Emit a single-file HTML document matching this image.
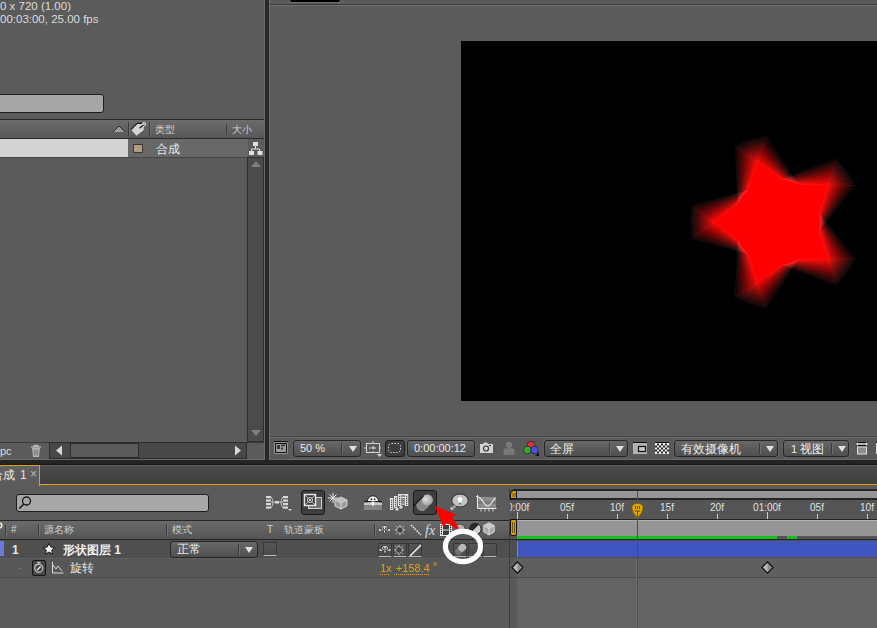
<!DOCTYPE html>
<html><head><meta charset="utf-8">
<style>
*{margin:0;padding:0;box-sizing:border-box}
html,body{width:877px;height:628px;overflow:hidden;background:#5b5b5b;font-family:"Liberation Sans",sans-serif;font-size:11px;color:#dcdcdc}
.a{position:absolute}
.t{position:absolute;white-space:nowrap;line-height:12px}
.dd{border:1px solid #262626;border-radius:3px;background:linear-gradient(#676767,#4f4f4f);box-shadow:0 0 0 1px rgba(110,110,110,.35)}
.dv{width:2px;border-left:1px solid #3a3a3a;border-right:1px solid #6e6e6e}
.tri{width:0;height:0;margin-left:1px;margin-top:0px;border-left:4px solid transparent;border-right:4px solid transparent;border-top:6px solid #e0e0e0}
.pb{background:#3e3e3e;border:1px solid #1b1b1b;border-radius:3px}
.hs{width:1px;height:12px;background:#3c3c3c;box-shadow:1px 0 0 #727272}
.sw{width:14px;height:14px;background:linear-gradient(#555,#4c4c4c);border:1px solid #383838;border-bottom:1px solid #b8b8b8}
.rl{font-size:10px;color:#e0e0e0;line-height:11px}
</style></head><body>
<!-- PROJECT PANEL -->
<div class="a" style="left:0;top:0;width:265px;height:460px;background:#5b5b5b"></div>
<div class="t" style="left:0;top:0px;font-size:11.5px;line-height:13px">0 x 720 (1.00)</div>
<div class="t" style="left:0;top:13px;font-size:11.5px;line-height:13px">00:03:00, 25.00 fps</div>
<div class="a" style="left:-4px;top:94px;width:108px;height:19px;background:#a6a6a6;border:1px solid #1f1f1f;border-radius:3px"></div>
<div class="a" style="left:0;top:119px;width:265px;height:1px;background:#2a2a2a"></div>
<div class="a" style="left:0;top:120px;width:264px;height:18px;background:linear-gradient(#6c6c6c,#575757)"></div>
<div class="a" style="left:0;top:138px;width:264px;height:1px;background:#2a2a2a"></div>
<div class="a" style="left:0;top:139px;width:128px;height:18px;background:#d3d3d3"></div>
<div class="a" style="left:128px;top:139px;width:120px;height:18px;background:#686868"></div>
<div class="a" style="left:0;top:157px;width:248px;height:1px;background:#474747"></div>
<div class="a" style="left:133px;top:144px;width:10px;height:9px;background:#b09e7c;border:1px solid #3a3a3a"></div>
<div class="t" style="left:156px;top:143px;font-size:12px;color:#e8e8e8">合成</div>
<div class="t" style="left:155px;top:124px;font-size:10px;color:#cfcfcf">类型</div>
<div class="t" style="left:232px;top:124px;font-size:10px;color:#cfcfcf">大小</div>
<div class="a" style="left:226px;top:124px;width:1px;height:11px;background:#3f3f3f"></div>
<!-- scrollbar v -->
<div class="a" style="left:248px;top:139px;width:16px;height:18px;background:#5b5b5b"></div>
<div class="a" style="left:247px;top:157px;width:17px;height:285px;background:#4b4b4b;border:1px solid #2f2f2f"></div>
<!-- bottom bar -->
<div class="a" style="left:0;top:442px;width:265px;height:17px;background:#5b5b5b;border-top:1px solid #3a3a3a"></div>
<div class="a" style="left:0;top:459px;width:264px;height:1px;background:#6a6a6a"></div>
<div class="a" style="left:49px;top:442px;width:198px;height:17px;background:#484848;border:1px solid #2d2d2d"></div>
<div class="a" style="left:70px;top:443px;width:69px;height:15px;background:#5b5b5b;border:1px solid #2d2d2d"></div>
<div class="t" style="left:0;top:445px;font-size:11px">pc</div>

<!-- SEPARATOR -->
<div class="a" style="left:264px;top:0;width:1px;height:460px;background:#6c6c6c"></div>
<div class="a" style="left:265px;top:0;width:4px;height:465px;background:#292929"></div>
<div class="a" style="left:269px;top:0;width:1px;height:460px;background:#6c6c6c"></div>

<!-- VIEWER -->
<div class="a" style="left:290px;top:-2px;width:50px;height:4px;background:#000;border-radius:2px;box-shadow:0 0 0 1px #6a6a6a"></div>
<div class="a" style="left:270px;top:4px;width:607px;height:1px;background:#3d3d3d"></div>
<div class="a" style="left:270px;top:5px;width:607px;height:1px;background:#6e6e6e"></div>
<div class="a" style="left:461px;top:41px;width:416px;height:360px;background:#000;overflow:hidden">
<svg id="star" width="416" height="360" viewBox="461 41 416 360" style="position:absolute;left:0;top:0;isolation:isolate"><polygon points="692.1,238.5 738.0,203.8 735.1,146.3 782.2,179.3 836.0,158.7 819.2,213.8 855.4,258.6 797.8,259.6 766.5,307.9 747.7,253.4" fill="rgb(255,0,0)" fill-opacity="0.0592" stroke="rgb(255,235,235)" stroke-opacity="0.07" stroke-width="0.7" style="mix-blend-mode:plus-lighter"/>
<polygon points="691.7,236.5 738.5,202.9 736.9,145.4 783.3,179.5 837.5,160.2 819.4,214.8 854.5,260.4 796.9,260.1 764.4,307.6 746.9,252.7" fill="rgb(255,0,0)" fill-opacity="0.0592" stroke="rgb(255,235,235)" stroke-opacity="0.07" stroke-width="0.7" style="mix-blend-mode:plus-lighter"/>
<polygon points="691.4,234.4 738.9,202.0 738.7,144.4 784.3,179.6 839.0,161.6 819.6,215.8 853.6,262.3 796.0,260.6 762.4,307.3 746.2,252.0" fill="rgb(255,0,0)" fill-opacity="0.0592" stroke="rgb(255,235,235)" stroke-opacity="0.07" stroke-width="0.7" style="mix-blend-mode:plus-lighter"/>
<polygon points="691.1,232.4 739.4,201.1 740.6,143.5 785.3,179.8 840.4,163.1 819.7,216.9 852.6,264.1 795.1,261.0 760.3,306.9 745.5,251.3" fill="rgb(255,0,0)" fill-opacity="0.0592" stroke="rgb(255,235,235)" stroke-opacity="0.07" stroke-width="0.7" style="mix-blend-mode:plus-lighter"/>
<polygon points="690.9,230.3 739.9,200.2 742.5,142.7 786.3,180.0 841.8,164.7 819.8,217.9 851.5,265.9 794.1,261.4 758.3,306.4 744.8,250.5" fill="rgb(255,0,0)" fill-opacity="0.0592" stroke="rgb(255,235,235)" stroke-opacity="0.07" stroke-width="0.7" style="mix-blend-mode:plus-lighter"/>
<polygon points="690.7,228.2 740.5,199.3 744.4,141.9 787.3,180.3 843.1,166.3 819.9,218.9 850.5,267.7 793.2,261.8 756.3,306.0 744.1,249.7" fill="rgb(255,0,0)" fill-opacity="0.0592" stroke="rgb(255,235,235)" stroke-opacity="0.07" stroke-width="0.7" style="mix-blend-mode:plus-lighter"/>
<polygon points="690.6,226.2 741.0,198.4 746.4,141.1 788.3,180.5 844.5,167.9 820.0,219.9 849.3,269.4 792.2,262.2 754.2,305.5 743.5,248.9" fill="rgb(255,0,0)" fill-opacity="0.0592" stroke="rgb(255,235,235)" stroke-opacity="0.07" stroke-width="0.7" style="mix-blend-mode:plus-lighter"/>
<polygon points="690.5,224.1 741.6,197.6 748.3,140.4 789.3,180.8 845.7,169.5 820.0,221.0 848.2,271.1 791.3,262.6 752.3,304.9 742.8,248.1" fill="rgb(255,0,0)" fill-opacity="0.0592" stroke="rgb(255,235,235)" stroke-opacity="0.07" stroke-width="0.7" style="mix-blend-mode:plus-lighter"/>
<polygon points="690.5,222.0 742.2,196.7 750.3,139.7 790.3,181.1 847.0,171.2 820.0,222.0 847.0,272.8 790.3,262.9 750.3,304.3 742.2,247.3" fill="rgb(255,0,0)" fill-opacity="0.0592" stroke="rgb(255,235,235)" stroke-opacity="0.07" stroke-width="0.7" style="mix-blend-mode:plus-lighter"/>
<polygon points="690.5,219.9 742.8,195.9 752.3,139.1 791.3,181.4 848.2,172.9 820.0,223.0 845.7,274.5 789.3,263.2 748.3,303.6 741.6,246.4" fill="rgb(255,0,0)" fill-opacity="0.0592" stroke="rgb(255,235,235)" stroke-opacity="0.07" stroke-width="0.7" style="mix-blend-mode:plus-lighter"/>
<polygon points="690.6,217.8 743.5,195.1 754.2,138.5 792.2,181.8 849.3,174.6 820.0,224.1 844.5,276.1 788.3,263.5 746.4,302.9 741.0,245.6" fill="rgb(255,0,0)" fill-opacity="0.0592" stroke="rgb(255,235,235)" stroke-opacity="0.07" stroke-width="0.7" style="mix-blend-mode:plus-lighter"/>
<polygon points="690.7,215.8 744.1,194.3 756.3,138.0 793.2,182.2 850.5,176.3 819.9,225.1 843.1,277.7 787.3,263.7 744.4,302.1 740.5,244.7" fill="rgb(255,0,0)" fill-opacity="0.0592" stroke="rgb(255,235,235)" stroke-opacity="0.07" stroke-width="0.7" style="mix-blend-mode:plus-lighter"/>
<polygon points="690.9,213.7 744.8,193.5 758.3,137.6 794.1,182.6 851.5,178.1 819.8,226.1 841.8,279.3 786.3,264.0 742.5,301.3 739.9,243.8" fill="rgb(255,0,0)" fill-opacity="0.0592" stroke="rgb(255,235,235)" stroke-opacity="0.07" stroke-width="0.7" style="mix-blend-mode:plus-lighter"/>
<polygon points="691.1,211.6 745.5,192.7 760.3,137.1 795.1,183.0 852.6,179.9 819.7,227.1 840.4,280.9 785.3,264.2 740.6,300.5 739.4,242.9" fill="rgb(255,0,0)" fill-opacity="0.0592" stroke="rgb(255,235,235)" stroke-opacity="0.07" stroke-width="0.7" style="mix-blend-mode:plus-lighter"/>
<polygon points="691.4,209.6 746.2,192.0 762.4,136.7 796.0,183.4 853.6,181.7 819.6,228.2 839.0,282.4 784.3,264.4 738.7,299.6 738.9,242.0" fill="rgb(255,0,0)" fill-opacity="0.0592" stroke="rgb(255,235,235)" stroke-opacity="0.07" stroke-width="0.7" style="mix-blend-mode:plus-lighter"/>
<polygon points="691.7,207.5 746.9,191.3 764.4,136.4 796.9,183.9 854.5,183.6 819.4,229.2 837.5,283.8 783.3,264.5 736.9,298.6 738.5,241.1" fill="rgb(255,0,0)" fill-opacity="0.0592" stroke="rgb(255,235,235)" stroke-opacity="0.07" stroke-width="0.7" style="mix-blend-mode:plus-lighter"/>
<polygon points="692.1,205.5 747.7,190.6 766.5,136.1 797.8,184.4 855.4,185.4 819.2,230.2 836.0,285.3 782.2,264.7 735.1,297.7 738.0,240.2" fill="rgb(255,0,0)" fill-opacity="0.0592" stroke="rgb(255,235,235)" stroke-opacity="0.07" stroke-width="0.7" style="mix-blend-mode:plus-lighter"/></svg>
</div>

<!-- viewer toolbar items -->
<div class="a" style="left:270px;top:436px;width:607px;height:1px;background:#464646"></div>
<div class="a" style="left:270px;top:437px;width:607px;height:1px;background:#6a6a6a"></div>
<div class="a" style="left:270px;top:438px;width:607px;height:20px;background:#595959"></div>
<div class="a" style="left:270px;top:458px;width:607px;height:1px;background:#595959"></div>
<div class="a" style="left:270px;top:459px;width:607px;height:1px;background:#6c6c6c"></div>
<svg class="a" style="left:273px;top:440px" width="16" height="15"><path d="M1 1.5h14" stroke="#111"/><rect x="1.5" y="2.5" width="13" height="11" fill="#d0d0d0"/><rect x="2.5" y="3.5" width="11" height="9" fill="#9c9c9c" stroke="#151515"/><rect x="4" y="5" width="3" height="4" fill="#3a3a3a"/><rect x="8" y="4.5" width="4" height="1.8" fill="#3a3a3a"/><rect x="8" y="7.5" width="2" height="2" fill="#3a3a3a"/></svg>
<div class="a dd" style="left:293px;top:440px;width:68px;height:17px"></div>
<div class="t" style="left:300px;top:442px;color:#e6e6e6">50 %</div>
<div class="a dv" style="left:341px;top:443px;height:11px"></div>
<div class="a tri" style="left:348px;top:446px"></div>
<svg class="a" style="left:364px;top:440px" width="20" height="18"><rect x="2.5" y="3.5" width="13" height="9" fill="none" stroke="#d4d4d4"/><path d="M9 1v15M0 8h18" stroke="#d4d4d4" stroke-dasharray="2 3" /><circle cx="9" cy="8" r="1.3" fill="#d4d4d4"/><path d="M13 14h5l-2.5 3z" fill="#d4d4d4"/></svg>
<div class="a" style="left:385px;top:440px;width:20px;height:17px;background:#3d3d3d;border:1px solid #1c1c1c;border-radius:3px"></div>
<svg class="a" style="left:387px;top:442px" width="16" height="13"><rect x="1.5" y="1.5" width="12" height="9" rx="3" fill="none" stroke="#dcdcdc" stroke-dasharray="1.5 1.5"/></svg>
<div class="a dd" style="left:407px;top:440px;width:68px;height:17px"></div>
<div class="t" style="left:414px;top:442px;color:#e6e6e6">0:00:00:12</div>
<svg class="a" style="left:479px;top:441px" width="15" height="13"><path d="M1 3h3l1-1.5h3l1 1.5h5v9h-13z" fill="#d2d2d2"/><circle cx="7" cy="7.5" r="2.5" fill="none" stroke="#333" stroke-width="1.2"/><rect x="10" y="4" width="2" height="1" fill="#333"/></svg>
<svg class="a" style="left:503px;top:441px" width="13" height="15"><circle cx="6" cy="4" r="3.2" fill="#787878"/><path d="M0.5 14v-4q0-3 3-3h5q3 0 3 3v4z" fill="#787878"/></svg>
<svg class="a" style="left:522px;top:440px" width="18" height="17"><circle cx="9" cy="5" r="3.8" fill="#e03030" stroke="#222" stroke-width=".7"/><circle cx="5.5" cy="10" r="3.8" fill="#30b030" stroke="#222" stroke-width=".7"/><circle cx="12.5" cy="10" r="3.8" fill="#5050e0" stroke="#222" stroke-width=".7"/><path d="M13 16h4v-4z" fill="#111"/></svg>
<div class="a dd" style="left:544px;top:440px;width:84px;height:17px"></div>
<div class="t" style="left:550px;top:443px;font-size:12px;color:#ececec">全屏</div>
<div class="a dv" style="left:609px;top:443px;height:11px"></div>
<div class="a tri" style="left:615px;top:446px"></div>
<svg class="a" style="left:632px;top:441px" width="16" height="14"><path d="M1 1.5h14" stroke="#111"/><rect x="1" y="2" width="14" height="11" fill="#b2b2b2"/><rect x="6.5" y="5.5" width="7" height="5" fill="#c8c8c8" stroke="#111" stroke-width="1.2"/></svg>
<svg class="a" style="left:654px;top:441px" width="16" height="14"><path d="M1 1.5h14" stroke="#111"/><rect x="1" y="2" width="14" height="11" fill="#f0f0f0"/><rect x="3" y="2.5" width="2" height="2" fill="#2a2a2a"/><rect x="7" y="2.5" width="2" height="2" fill="#2a2a2a"/><rect x="11" y="2.5" width="2" height="2" fill="#2a2a2a"/><rect x="1" y="4.5" width="2" height="2" fill="#2a2a2a"/><rect x="5" y="4.5" width="2" height="2" fill="#2a2a2a"/><rect x="9" y="4.5" width="2" height="2" fill="#2a2a2a"/><rect x="13" y="4.5" width="2" height="2" fill="#2a2a2a"/><rect x="3" y="6.5" width="2" height="2" fill="#2a2a2a"/><rect x="7" y="6.5" width="2" height="2" fill="#2a2a2a"/><rect x="11" y="6.5" width="2" height="2" fill="#2a2a2a"/><rect x="1" y="8.5" width="2" height="2" fill="#2a2a2a"/><rect x="5" y="8.5" width="2" height="2" fill="#2a2a2a"/><rect x="9" y="8.5" width="2" height="2" fill="#2a2a2a"/><rect x="13" y="8.5" width="2" height="2" fill="#2a2a2a"/><rect x="3" y="10.5" width="2" height="2" fill="#2a2a2a"/><rect x="7" y="10.5" width="2" height="2" fill="#2a2a2a"/><rect x="11" y="10.5" width="2" height="2" fill="#2a2a2a"/></svg>
<div class="a dd" style="left:674px;top:440px;width:104px;height:17px"></div>
<div class="t" style="left:681px;top:443px;font-size:12px;color:#ececec">有效摄像机</div>
<div class="a dv" style="left:759px;top:443px;height:11px"></div>
<div class="a tri" style="left:765px;top:446px"></div>
<div class="a dd" style="left:783px;top:440px;width:66px;height:17px"></div>
<div class="t" style="left:791px;top:443px;font-size:12px;color:#ececec"><span style="font-size:11px">1</span> 视图</div>
<div class="a dv" style="left:831px;top:443px;height:11px"></div>
<div class="a tri" style="left:837px;top:446px"></div>
<svg class="a" style="left:855px;top:440px" width="22" height="16"><path d="M1.5 2.5h11M1.5 5.5h11" stroke="#111"/><path d="M2 4h10" stroke="#e0e0e0" stroke-width="1.3"/><path d="M1 4l2-2v4zM13 4l-2-2v4z" fill="#e0e0e0"/><rect x="2.5" y="7" width="9" height="7" fill="#8c8c8c" stroke="#dcdcdc"/><path d="M21 2.5h2" stroke="#111"/><rect x="21" y="3" width="2" height="11" fill="#e0e0e0"/></svg>



<!-- gap -->
<div class="a" style="left:0;top:460px;width:877px;height:5px;background:#242424"></div>
<div class="a" style="left:0;top:464px;width:877px;height:1px;background:#1a1a1a"></div>

<!-- TIMELINE -->
<div class="a" style="left:0;top:465px;width:877px;height:163px;background:#5b5b5b"></div>
<div class="a" style="left:40px;top:465px;width:837px;height:19px;background:linear-gradient(#5a5a5a 0,#5a5a5a 1px,#4c4c4c 1px,#3f3f3f)"></div>
<div class="a" style="left:-2px;top:465px;width:42px;height:21px;border:1px solid #e5a000;border-bottom:none;background:linear-gradient(#626262,#5b5b5b)"></div>
<div class="a" style="left:40px;top:484px;width:837px;height:1px;background:#e5a000"></div>
<div class="t" style="left:-9px;top:469px;font-size:12px;color:#e8e8e8">合成</div><div class="t" style="left:20px;top:469px;font-size:12px;color:#e0e0e0">1</div><div class="t" style="left:30px;top:468px;font-size:12px;color:#b8b8b8">×</div>

<!-- timeline toolbar -->
<div class="a" style="left:16px;top:494px;width:193px;height:18px;background:#a7a7a7;border:1px solid #1d1d1d;border-radius:3px"></div>
<svg class="a" style="left:17px;top:495px" width="16" height="16"><circle cx="9.5" cy="6" r="4" fill="none" stroke="#1a1a1a" stroke-width="1.4"/><path d="M6.8 9l-4.5 4.5" stroke="#1a1a1a" stroke-width="1.6"/></svg>
<svg class="a" style="left:266px;top:495px" width="26" height="16"><g fill="#d8d8d8"><rect x="0" y="1" width="5" height="2.2"/><rect x="0" y="4.5" width="5" height="2.2"/><rect x="0" y="8" width="5" height="2.2"/><rect x="0" y="11.5" width="5" height="2.2"/><rect x="17" y="1" width="5" height="2.2"/><rect x="17" y="4.5" width="5" height="2.2"/><rect x="17" y="8" width="5" height="2.2"/><rect x="17" y="11.5" width="5" height="2.2"/><rect x="9" y="6" width="4" height="2.5"/></g><path d="M5 2q4 5 0 11M17 2q-4 5 0 11M5 7.2h12" stroke="#d8d8d8" fill="none" stroke-width=".8"/><path d="M22 14h4l-2 2z" fill="#d8d8d8"/></svg>
<div class="a pb" style="left:301px;top:490px;width:24px;height:25px"></div>
<svg class="a" style="left:303px;top:493px" width="20" height="18"><rect x="5.5" y="4.5" width="13" height="11" fill="#6e6e6e" stroke="#cfcfcf"/><rect x="1.5" y="1.5" width="11" height="11" fill="#3a3a3a" stroke="#e0e0e0" stroke-width="1.5"/><path d="M2 2l10 10M12 2l-10 10" stroke="#cfcfcf" stroke-width=".8"/><circle cx="7" cy="7" r="2.5" fill="#3a3a3a" stroke="#e0e0e0"/><circle cx="7" cy="7" r="1" fill="#fff"/></svg>
<svg class="a" style="left:328px;top:492px" width="20" height="19"><path d="M5 1v10M0 6h10M1.5 2.5l7 7M8.5 2.5l-7 7" stroke="#e8e8e8" stroke-width="1"/><path d="M13 5l6 3v6l-6 3-6-3v-6z" fill="#9a9a9a" stroke="#d8d8d8"/><path d="M7 8l6 3 6-3M13 11v6" stroke="#d8d8d8" fill="none"/><path d="M7 8l6-3 6 3-6 3z" fill="#c0c0c0"/></svg>
<svg class="a" style="left:363px;top:494px" width="20" height="17"><rect x="1" y="8.3" width="18" height="3" fill="#cacaca"/><rect x="1" y="11.3" width="18" height="4.7" fill="#858585"/><path d="M4.3 7.5a5.7 5.7 0 0 1 11.4 0z" fill="#f2f2f2" stroke="#1a1a1a" stroke-width="1"/><path d="M1 7.6h3.5M15.5 7.6h3.5" stroke="#1a1a1a" stroke-width="1.2"/><path d="M8.5 7.5h3l-0.8 4.5h-1.4z" fill="#f2f2f2"/><circle cx="8.4" cy="5.2" r=".85" fill="#222"/><circle cx="11.6" cy="5.2" r=".85" fill="#222"/></svg>
<svg class="a" style="left:389px;top:493px" width="21" height="19"><g fill="#e2e2e2"><rect x="1" y="5" width="3.2" height="12"/><rect x="5" y="3" width="3.2" height="12"/><rect x="9" y="1" width="3.2" height="12"/><rect x="16" y="1" width="3.2" height="12"/><rect x="12" y="1" width="4" height="1.2"/><rect x="12" y="4" width="4" height="1.2"/><rect x="12" y="10.5" width="4" height="1.2"/></g><rect x="12.2" y="5.2" width="3.8" height="5.3" fill="#8a8a8a"/><rect x="12.2" y="2.2" width="3.8" height="1.8" fill="#8a8a8a"/><g fill="#303030"><rect x="2.1" y="6.8" width="1.1" height="1.1"/><rect x="2.1" y="8.8" width="1.1" height="1.1"/><rect x="2.1" y="10.8" width="1.1" height="1.1"/><rect x="2.1" y="12.8" width="1.1" height="1.1"/><rect x="2.1" y="14.8" width="1.1" height="1.1"/><rect x="6.1" y="4.8" width="1.1" height="1.1"/><rect x="6.1" y="6.8" width="1.1" height="1.1"/><rect x="6.1" y="8.8" width="1.1" height="1.1"/><rect x="6.1" y="10.8" width="1.1" height="1.1"/><rect x="6.1" y="12.8" width="1.1" height="1.1"/><rect x="10.1" y="2.8" width="1.1" height="1.1"/><rect x="10.1" y="4.8" width="1.1" height="1.1"/><rect x="10.1" y="6.8" width="1.1" height="1.1"/><rect x="10.1" y="8.8" width="1.1" height="1.1"/><rect x="10.1" y="10.8" width="1.1" height="1.1"/><rect x="17.1" y="2.8" width="1.1" height="1.1"/><rect x="17.1" y="4.8" width="1.1" height="1.1"/><rect x="17.1" y="6.8" width="1.1" height="1.1"/><rect x="17.1" y="8.8" width="1.1" height="1.1"/><rect x="17.1" y="10.8" width="1.1" height="1.1"/></g><g fill="#dadada"><rect x="6.5" y="15" width="3" height="2.5"/><rect x="10.5" y="13" width="3" height="2.5"/></g></svg>
<div class="a pb" style="left:413px;top:490px;width:24px;height:25px"></div>
<svg class="a" style="left:413px;top:490px" width="24" height="25"><defs><radialGradient id="cy" cx="0.45" cy="0.35" r="0.7"><stop offset="0" stop-color="#dedede"/><stop offset="1" stop-color="#9a9a9a"/></radialGradient></defs><g transform="rotate(-45 12 12.5)"><rect x="2" y="6.8" width="19" height="11" rx="5.5" fill="#7a7a7a"/><path d="M5.5 7.3q-2.5 5.2 0 10.4M8 7.3q-2.5 5.2 0 10.4M10.5 7.3q-2.5 5.2 0 10.4" stroke="#9c9c9c" fill="none" stroke-width="1"/><rect x="10" y="6.8" width="11" height="11" rx="5.5" fill="url(#cy)"/><path d="M2 6.8h14" stroke="#111" stroke-width="1"/></g></svg>
<svg class="a" style="left:449px;top:492px" width="20" height="19"><ellipse cx="11" cy="8.5" rx="8.2" ry="6.5" fill="#c2c2c2" stroke="#303030" stroke-width="1"/><circle cx="3" cy="16.5" r="1.8" fill="#b8b8b8"/><circle cx="5.5" cy="14.5" r="1.3" fill="#b8b8b8"/><path d="M8.5 7.5a2.5 2.5 0 1 1 5 0l-2.5 5z" fill="#fff"/><path d="M10 11h2l-1 2z" fill="#333"/></svg>
<svg class="a" style="left:476px;top:495px" width="21" height="17"><rect x="1" y="0" width="19" height="13" fill="#8c8c8c"/><rect x="1" y="0" width="19" height="2" fill="#5e5e5e"/><rect x="1" y="6" width="19" height="3" fill="#7a7a7a"/><path d="M1.5 0v13.5h19" stroke="#e6e6e6" fill="none"/><path d="M2 2c4 0 6 9 9.5 9s5-6 8-8" stroke="#ececec" fill="none" stroke-width="1.2"/><path d="M5 14v2.5M9 14v2.5M13 14v2.5M17 14v2.5" stroke="#d8d8d8"/><path d="M0 1.5h2" stroke="#e6e6e6"/></svg>
<!-- header row -->
<div class="a" style="left:0;top:520px;width:510px;height:1px;background:#262626"></div>
<div class="a" style="left:0;top:521px;width:510px;height:18px;background:linear-gradient(#6b6b6b,#555)"></div>
<div class="a" style="left:0;top:539px;width:510px;height:1px;background:#262626"></div>
<div class="a hs" style="left:5px;top:525px"></div>
<svg class="a" style="left:0;top:521px" width="5" height="10"><circle cx="-0.5" cy="4.5" r="2.3" fill="none" stroke="#f0f0f0" stroke-width="1.4"/></svg>
<div class="a hs" style="left:38px;top:524px"></div>
<div class="a hs" style="left:166px;top:524px"></div>
<div class="a hs" style="left:374px;top:524px"></div>
<div class="t" style="left:11px;top:524px;font-size:10px;color:#d0d0d0">#</div>
<div class="t" style="left:44px;top:524px;font-size:10px;color:#d0d0d0">源名称</div>
<div class="t" style="left:172px;top:524px;font-size:10px;color:#d0d0d0">模式</div>
<div class="t" style="left:267px;top:524px;font-size:10px;color:#d0d0d0">T</div>
<div class="t" style="left:284px;top:524px;font-size:10px;color:#d0d0d0">轨道蒙板</div>
<svg class="a" style="left:374px;top:519px" width="126" height="21"><g transform="translate(5 6.5)"><path d="M0 4.5h3M8 4.5h3" stroke="#ececec" stroke-width="1.3"/><path d="M2.3 4.5v-2.2q0-2.3 3.2-2.3t3.2 2.3v2.2z" fill="#f2f2f2" stroke="#1e1e1e" stroke-width=".8"/><path d="M4.5 4.5h2v3h-2z" fill="#f2f2f2" stroke="#1e1e1e" stroke-width=".6"/><circle cx="4.3" cy="2.6" r=".85" fill="#1e1e1e"/><circle cx="6.7" cy="2.6" r=".85" fill="#1e1e1e"/></g><g transform="translate(21 6)" stroke="#e0e0e0" fill="none"><rect x="3" y="3" width="4" height="4" stroke="#444" fill="#444"/><circle cx="5" cy="5" r="3.2" stroke-dasharray="1.5 1"/><path d="M5 0v1.5M5 8.5v1.5M0 5h1.5M8.5 5h1.5M1.3 1.3l1 1M8.7 1.3l-1 1M1.3 8.7l1-1M8.7 8.7l-1-1"/></g><path d="M37 6l10 10" stroke="#e8e8e8" stroke-width="1.6" stroke-dasharray="1.6 1"/><text x="51" y="16" font-family="Liberation Serif" font-style="italic" font-size="14" fill="#dcdcdc">fx</text><g transform="translate(66 5)"><rect x="0" y="0" width="12" height="12" fill="#e8e8e8"/><rect x="3" y="1" width="6" height="4.5" fill="#3a3a3a"/><rect x="3" y="6.5" width="6" height="4.5" fill="#3a3a3a"/><rect x="0.8" y="1" width="1.2" height="1.2" fill="#2a2a2a"/><rect x="10" y="1" width="1.2" height="1.2" fill="#2a2a2a"/><rect x="0.8" y="3" width="1.2" height="1.2" fill="#2a2a2a"/><rect x="10" y="3" width="1.2" height="1.2" fill="#2a2a2a"/><rect x="0.8" y="5" width="1.2" height="1.2" fill="#2a2a2a"/><rect x="10" y="5" width="1.2" height="1.2" fill="#2a2a2a"/><rect x="0.8" y="7" width="1.2" height="1.2" fill="#2a2a2a"/><rect x="10" y="7" width="1.2" height="1.2" fill="#2a2a2a"/><rect x="0.8" y="9" width="1.2" height="1.2" fill="#2a2a2a"/><rect x="10" y="9" width="1.2" height="1.2" fill="#2a2a2a"/></g><circle cx="86" cy="10" r="5" fill="#b4b4b4" stroke="#333" stroke-width=".8"/><g transform="translate(101.5 10)"><circle r="5.6" fill="#d0d0d0" stroke="#222" stroke-width="1"/><path d="M-4.5 3.5A5.6 5.6 0 0 1 3.5 -4.5z" fill="#2a2a2a"/></g><g transform="translate(115 10)"><path d="M0 -6.2l5.2 2.8v6.3l-5.2 3-5.2-3v-6.3z" fill="#a8a8a8" stroke="#dadada"/><path d="M-5.2 -3.4l5.2 3 5.2-3M0 -.4v6.5" stroke="#dadada" fill="none"/><path d="M-5 -3.3l5 -2.7 5 2.7-5 2.9z" fill="#cacaca"/></g></svg>
<!-- layer row -->
<div class="a" style="left:0;top:540px;width:510px;height:18px;background:#4f4f4f"></div>
<div class="a" style="left:0;top:558px;width:510px;height:1px;background:#5f5f5f"></div>
<div class="a" style="left:0;top:559px;width:510px;height:18px;background:#575757"></div>
<div class="a" style="left:0;top:577px;width:510px;height:1px;background:#4a4a4a"></div>
<div class="a" style="left:0;top:541px;width:4px;height:15px;background:#6a7adf"></div>
<div class="t" style="left:12px;top:544px;font-size:12px;font-weight:bold;color:#e4e4e4">1</div>
<svg class="a" style="left:42px;top:542px" width="14" height="14"><path d="M7 1.2l1.7 3.8 4.1.4-3.1 2.7.9 4-3.6-2.1-3.6 2.1.9-4-3.1-2.7 4.1-.4z" fill="#f0f0f0" stroke="#1e1e1e" stroke-width="1"/></svg>
<div class="t" style="left:63px;top:544px;font-size:12px;font-weight:bold;color:#f0f0f0">形状图层 <span style="font-size:12px">1</span></div>
<div class="a dd" style="left:170px;top:541px;width:88px;height:17px;box-shadow:none"></div>
<div class="t" style="left:177px;top:543px;font-size:12px;color:#ececec">正常</div>
<div class="a dv" style="left:238px;top:544px;height:11px"></div>
<div class="a tri" style="left:244px;top:547px"></div>
<div class="a sw" style="left:263px;top:542px"></div>
<div class="a sw" style="left:378px;top:543px"></div>
<div class="a sw" style="left:393px;top:543px"></div>
<div class="a sw" style="left:408px;top:543px"></div>
<div class="a sw" style="left:453px;top:543px"></div>
<div class="a sw" style="left:468px;top:543px"></div>
<div class="a sw" style="left:483px;top:543px"></div>
<svg class="a" style="left:378px;top:543px" width="45" height="14"><g transform="translate(1.5 2.5)"><path d="M0 4.5h3M8 4.5h3" stroke="#ececec" stroke-width="1.3"/><path d="M2.3 4.5v-2.2q0-2.3 3.2-2.3t3.2 2.3v2.2z" fill="#f2f2f2" stroke="#1e1e1e" stroke-width=".8"/><path d="M4.5 4.5h2v3h-2z" fill="#f2f2f2" stroke="#1e1e1e" stroke-width=".6"/><circle cx="4.3" cy="2.6" r=".85" fill="#1e1e1e"/><circle cx="6.7" cy="2.6" r=".85" fill="#1e1e1e"/></g><g transform="translate(16 2)" stroke="#d8d8d8" fill="none"><rect x="3" y="3" width="4" height="4" stroke="#444" fill="#444"/><circle cx="5" cy="5" r="3.2" stroke-dasharray="1.5 1"/><path d="M5 0v1.5M5 8.5v1.5M0 5h1.5M8.5 5h1.5M1.3 1.3l1 1M8.7 1.3l-1 1M1.3 8.7l1-1M8.7 8.7l-1-1"/></g><path d="M32 12l10-10" stroke="#202020" stroke-width="2.4"/><path d="M32.5 12.3l9.8-9.8" stroke="#dcdcdc" stroke-width="1.8" stroke-linecap="round"/></svg>
<svg class="a" style="left:454px;top:543px" width="13" height="13"><g transform="rotate(-45 6.5 6.5)"><rect x="0" y="3" width="13" height="7" rx="3.5" fill="#707070"/><rect x="5" y="3" width="8" height="7" rx="3.5" fill="#b8b8b8"/></g></svg>
<!-- property row -->
<div class="a" style="left:32px;top:560px;width:14px;height:16px;background:#474747;border:1px solid #151515;border-radius:2px"></div>
<svg class="a" style="left:33px;top:561px" width="12" height="14"><circle cx="5.8" cy="7.3" r="4.1" fill="none" stroke="#c8c8c8" stroke-width="1.2"/><path d="M4 1.2h3.6M5.8 1.5v2M1.8 3.6l1 1" stroke="#c8c8c8" stroke-width="1.1"/><path d="M4 9.3l3.8-4" stroke="#e0e0e0" stroke-width="1.4"/></svg>
<svg class="a" style="left:51px;top:561px" width="13" height="13"><path d="M1.5 1v11h11" stroke="#d8d8d8" fill="none"/><path d="M2 4l3 4 2-3 4 5" stroke="#d8d8d8" fill="none"/></svg>
<div class="t" style="left:70px;top:562px;font-size:12px;color:#e8e8e8">旋转</div>
<div class="a" style="left:19px;top:568px;width:2px;height:1px;background:#787878"></div>
<div class="t" style="left:380px;top:562px;font-size:11px;color:#d9a21a">1x <span style="margin-left:1px">+158.4</span> <span style="position:relative;top:-2px">°</span></div>
<div class="a" style="left:380px;top:574px;width:9px;height:1px;border-top:1px dotted #d9a21a"></div>
<div class="a" style="left:394px;top:574px;width:35px;height:1px;border-top:1px dotted #d9a21a"></div>

<!-- TIMELINE RIGHT -->
<div class="a" style="left:509px;top:485px;width:368px;height:143px;background:#5c5c5c"></div>
<div class="a" style="left:509px;top:489px;width:1px;height:139px;background:#3c3c3c"></div>
<div class="a" style="left:510px;top:489px;width:367px;height:11px;background:#262626;border-radius:5px 0 0 0"></div>
<div class="a" style="left:517px;top:491px;width:360px;height:7px;background:#959595"></div>
<div class="a" style="left:510px;top:490px;width:7px;height:9px;background:#d9a100;border:1px solid #111;border-radius:4px 0 0 0"></div>
<svg class="a" style="left:510px;top:490px" width="7" height="9"><path d="M3 3v4M5 3v4" stroke="#4a3500" stroke-width=".8"/></svg>
<div class="a" style="left:510px;top:500px;width:367px;height:19px;background:#555555"></div>
<div class="a" style="left:510px;top:519px;width:367px;height:1px;background:#262626"></div>
<div class="a" style="left:510px;top:520px;width:367px;height:19px;background:#555"></div>
<div class="a" style="left:517px;top:520px;width:360px;height:16px;background:linear-gradient(#b0b0b0 0,#b0b0b0 1px,#949494 1px)"></div>
<div class="a" style="left:510px;top:519px;width:7px;height:17px;background:#d9a100;border:1px solid #111;border-radius:2px"></div>
<svg class="a" style="left:510px;top:519px" width="7" height="17"><path d="M2.5 3v11M4.5 3v11" stroke="#5a4000" stroke-width=".8"/></svg>
<div class="a" style="left:517px;top:536px;width:260px;height:3px;background:#14c21c"></div>
<div class="a" style="left:777px;top:536px;width:10px;height:3px;background:#555"></div>
<div class="a" style="left:787px;top:536px;width:10px;height:3px;background:#14c21c"></div>
<div class="a" style="left:797px;top:536px;width:80px;height:3px;background:#555"></div>
<div class="a" style="left:510px;top:539px;width:367px;height:1px;background:#262626"></div>
<div class="a" style="left:510px;top:540px;width:367px;height:18px;background:#4f4f4f"></div>
<div class="a" style="left:517px;top:541px;width:360px;height:16px;background:#4055c0;border-left:1px solid #7585e0"></div>
<div class="a" style="left:510px;top:558px;width:367px;height:1px;background:#5f5f5f"></div>
<div class="a" style="left:510px;top:559px;width:367px;height:18px;background:#5f5f5f"></div>
<div class="a" style="left:510px;top:559px;width:7px;height:69px;background:#585858"></div>
<div class="a" style="left:517px;top:578px;width:360px;height:50px;background:#636363"></div>
<div class="a" style="left:510px;top:577px;width:367px;height:1px;background:#4a4a4a"></div>

<div class="a" style="left:510px;top:500px;width:6px;height:19px;background:#555"></div>
<div class="a" style="left:517px;top:512px;width:1px;height:7px;background:#d0d0d0"></div>
<div class="a" style="left:510px;top:500px;width:40px;height:12px;overflow:hidden"><div class="t rl" style="left:-3px;top:2px">0:00f</div></div>
<div class="a" style="left:567px;top:514px;width:1px;height:5px;background:#d0d0d0"></div>
<div class="t rl" style="left:527px;top:502px;width:80px;text-align:center">05f</div>
<div class="a" style="left:617px;top:514px;width:1px;height:5px;background:#d0d0d0"></div>
<div class="t rl" style="left:577px;top:502px;width:80px;text-align:center">10f</div>
<div class="a" style="left:667px;top:514px;width:1px;height:5px;background:#d0d0d0"></div>
<div class="t rl" style="left:627px;top:502px;width:80px;text-align:center">15f</div>
<div class="a" style="left:717px;top:514px;width:1px;height:5px;background:#d0d0d0"></div>
<div class="t rl" style="left:677px;top:502px;width:80px;text-align:center">20f</div>
<div class="a" style="left:767px;top:512px;width:1px;height:7px;background:#d0d0d0"></div>
<div class="t rl" style="left:727px;top:502px;width:80px;text-align:center">01:00f</div>
<div class="a" style="left:817px;top:514px;width:1px;height:5px;background:#d0d0d0"></div>
<div class="t rl" style="left:777px;top:502px;width:80px;text-align:center">05f</div>
<div class="a" style="left:867px;top:514px;width:1px;height:5px;background:#d0d0d0"></div>
<div class="t rl" style="left:827px;top:502px;width:80px;text-align:center">10f</div>
<div class="a" style="left:509px;top:500px;width:1px;height:19px;background:#595959"></div>
<div class="a" style="left:500px;top:500px;width:9px;height:19px;background:#5b5b5b"></div>
<!-- CTI -->
<div class="a" style="left:636px;top:559px;width:1px;height:69px;background:#6c6c6c"></div>
<div class="a" style="left:637px;top:491px;width:1px;height:137px;background:#e01010"></div>
<svg class="a" style="left:631px;top:503px" width="13" height="16"><path d="M1 5q0-4.5 5.5-4.5t5.5 4.5q0 4-5.5 10q-5.5-6-5.5-10z" fill="#e0a800" stroke="#7a5a00" stroke-width=".6"/><path d="M4.5 3v3M6.5 3v3M8.5 3v3M4 8h5M6.5 8v6" stroke="#4a3500" stroke-width=".8"/></svg>
<!-- keyframes -->
<svg class="a" style="left:511px;top:561px" width="13" height="13"><path d="M6.5 1l5.5 5.5-5.5 5.5-5.5-5.5z" fill="#a8a8a8" stroke="#111" stroke-width="1.3"/><path d="M6.5 2l4.5 4.5-4.5 4.5z" fill="#8a8a8a"/><path d="M6.5 2l-4.5 4.5 4.5 4.5z" fill="#b8b8b8"/></svg>
<svg class="a" style="left:761px;top:561px" width="13" height="13"><path d="M6.5 1l5.5 5.5-5.5 5.5-5.5-5.5z" fill="#a8a8a8" stroke="#111" stroke-width="1.3"/><path d="M6.5 2l4.5 4.5-4.5 4.5z" fill="#8a8a8a"/><path d="M6.5 2l-4.5 4.5 4.5 4.5z" fill="#b8b8b8"/></svg>

<!-- project panel icons -->
<svg class="a" style="left:105px;top:118px" width="50" height="22" viewBox="105 118 50 22"><path d="M113 132l6-6 6 6z" fill="#9c9c9c"/><path d="M113 132l6-6 6 6" fill="none" stroke="#2a2a2a" stroke-width="1"/>
<path d="M128.5 122v15M149.5 122v15" stroke="#3a3a3a"/><path d="M129.5 122v15M150.5 122v15" stroke="#707070"/>
<path d="M131 129.7L137.2 123.4H144.5L143.5 130.3L136.4 135.7Z" fill="#d4d4d4"/><path d="M131 129.7L137.2 123.4H143" fill="none" stroke="#1a1a1a" stroke-width="1.1"/><circle cx="144" cy="124.2" r="1.6" fill="none" stroke="#e8e8e8"/><path d="M139.5 128.3L143.5 125" stroke="#1a1a1a" stroke-width="1.3"/></svg>

<div class="a" style="left:226px;top:124px;width:1px;height:11px;background:#3f3f3f"></div>
<svg class="a" style="left:248px;top:141px" width="16" height="15"><g fill="#e0e0e0"><rect x="5" y="1" width="5" height="4"/><rect x="1" y="10" width="5" height="4"/><rect x="9.5" y="10" width="5" height="4"/></g><path d="M7.5 5v3M3.5 10V8h8v2" stroke="#e0e0e0" fill="none"/></svg>
<svg class="a" style="left:250px;top:159px" width="12" height="10"><path d="M1 8l5-6 5 6z" fill="#7e7e7e"/></svg>
<svg class="a" style="left:250px;top:428px" width="12" height="10"><path d="M1 2l5 6 5-6z" fill="#7e7e7e"/></svg>
<svg class="a" style="left:29px;top:443px" width="14" height="16"><path d="M2 4h10M5 4v-1.5h4v1.5" stroke="#b4b4b4" stroke-width="1.3" fill="none"/><path d="M3 5h8l-1 9h-6z" fill="#b4b4b4"/><path d="M5.3 6.5v6M7 6.5v6M8.7 6.5v6" stroke="#6a6a6a" stroke-width=".8"/></svg>
<svg class="a" style="left:54px;top:444px" width="10" height="13"><path d="M8 1.5v10l-6-5z" fill="#d8d8d8"/></svg>
<svg class="a" style="left:233px;top:444px" width="10" height="13"><path d="M2 1.5v10l6-5z" fill="#d8d8d8"/></svg>
<!-- annotations -->
<svg class="a" style="left:0;top:0;overflow:visible" width="877" height="628"><path d="M435.2 506L456.8 514.9L452 516.8L458.8 528L457.5 529.8L446.7 522.5L443.5 528Z" fill="#ff0000"/><ellipse cx="463" cy="546.5" rx="17.6" ry="15.1" fill="none" stroke="#ffffff" stroke-width="5.2"/></svg>
</body></html>
